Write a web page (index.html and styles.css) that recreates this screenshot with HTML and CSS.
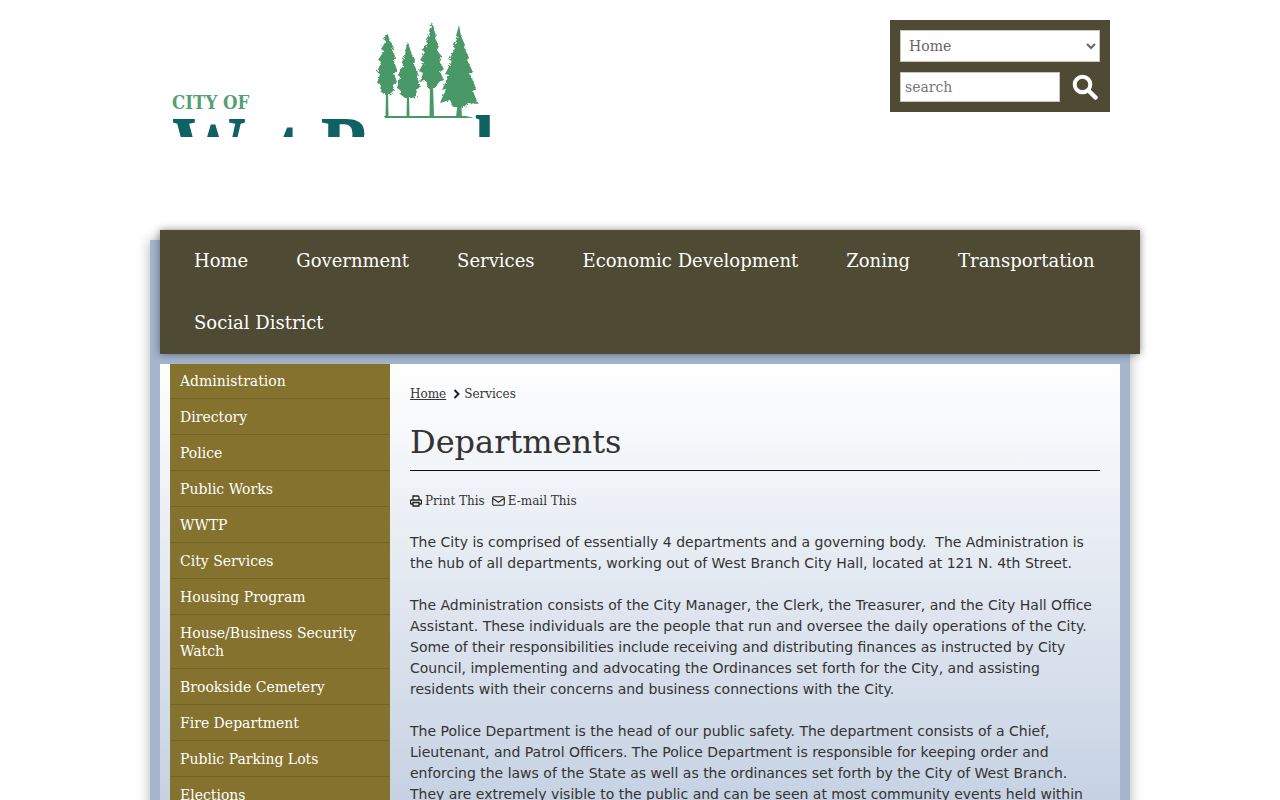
FILE: index.html
```html
<!DOCTYPE html>
<html lang="en">
<head>
    <meta charset="UTF-8">
    <meta name="viewport" content="width=device-width, initial-scale=1.0">
    <title>Departments - City of West Branch</title>
    <link rel="stylesheet" href="styles.css">
</head>
<body>
    <div class="page">
        <div class="header">
            <div class="logo">
                <svg class="logo-trees" width="120" height="100" viewBox="375 20 120 100" aria-hidden="true">
                    <defs>
                        <filter id="rough" x="-10%" y="-10%" width="120%" height="120%">
                            <feTurbulence type="fractalNoise" baseFrequency="0.45" numOctaves="2" seed="4"/>
                            <feDisplacementMap in="SourceGraphic" scale="3.500"/>
                        </filter>
                    </defs>
                    <g filter="url(#rough)">
                        <path d="M387 32 L384 40 L386 41 L381 49 L384 51 L378 60 L381 62 L377 72 L380 74 L377 83 L381 84 L380 91 L384 94 L390 94 L394 90 L393 85 L397 82 L394 74 L397 70 L394 61 L396 58 L392 50 L394 48 L390 41 Z"/>
                        <path d="M408 42 L405 51 L406 53 L402 62 L403 65 L398 75 L400 77 L397 88 L400 90 L400 94 L405 98 L412 98 L417 96 L416 90 L420 87 L417 77 L418 74 L414 64 L415 61 L411 52 Z"/>
                        <path d="M432 22 L429 31 L430 33 L425 41 L428 43 L422 50 L425 52 L420 60 L424 62 L419 71 L423 73 L420 82 L426 81 L428 88 L435 88 L439 82 L444 80 L440 72 L444 69 L439 60 L442 57 L437 50 L439 46 L435 38 L436 36 Z"/>
                        <path d="M459 25 L456 36 L458 37 L453 47 L455 48 L449 60 L452 61 L445 74 L449 75 L442 90 L446 89 L440 103 L450 100 L453 107 L464 107 L468 103 L478 104 L473 91 L476 88 L470 74 L473 72 L467 60 L469 58 L464 47 L465 45 L461 36 Z"/>
                    </g>
                    <path d="M386 90 L388 90 L388.500 117 L385.500 117 Z"/>
                    <path d="M407 95 L409 95 L409.500 117 L406.500 117 Z"/>
                    <path d="M430 85 L433 85 L434 117 L429.500 117 Z"/>
                    <path d="M458 100 L461 100 L462 117 L456 117 Z"/>
                    <path d="M384 116 H466 L474 118 H385 Z"/>
                </svg>
                <div class="logo-city">CITY OF</div>
                <div class="logo-name"><span class="logo-west">West</span> <span class="logo-branch">Branch</span></div>
            </div>
            <div class="search-box">
                <select class="page-select">
                    <option>Home</option>
                </select>
                <div class="search-row">
                    <input class="search-input" type="text" placeholder="search">
                    <svg class="search-icon" width="26" height="26" viewBox="0 0 26 26" aria-hidden="true">
                        <circle cx="10.500" cy="10.500" r="7.800" fill="none" stroke="#fff" stroke-width="4"/>
                        <path d="M16.500 16.500 L23.500 23.500" stroke="#fff" stroke-width="4.500" stroke-linecap="round"/>
                    </svg>
                </div>
            </div>
        </div>

        <div class="wrapper">
            <ul class="main-nav">
                <li><a href="#">Home</a></li>
                <li><a href="#">Government</a></li>
                <li><a href="#">Services</a></li>
                <li><a href="#">Economic Development</a></li>
                <li><a href="#">Zoning</a></li>
                <li><a href="#">Transportation</a></li>
                <li><a href="#">Social District</a></li>
            </ul>

            <div class="content">
                <ul class="side-nav">
                    <li><a href="#">Administration</a></li>
                    <li><a href="#">Directory</a></li>
                    <li><a href="#">Police</a></li>
                    <li><a href="#">Public Works</a></li>
                    <li><a href="#">WWTP</a></li>
                    <li><a href="#">City Services</a></li>
                    <li><a href="#">Housing Program</a></li>
                    <li><a href="#">House/Business Security Watch</a></li>
                    <li><a href="#">Brookside Cemetery</a></li>
                    <li><a href="#">Fire Department</a></li>
                    <li><a href="#">Public Parking Lots</a></li>
                    <li><a href="#">Elections</a></li>
                </ul>

                <div class="main">
                    <div class="breadcrumb">
                        <a href="#">Home</a>
                        <svg class="crumb-arrow" width="7" height="10" viewBox="0 0 7 10" aria-hidden="true">
                            <path d="M1.500 1 L5.500 5 L1.500 9" fill="none" stroke="#222" stroke-width="2"/>
                        </svg>
                        <span>Services</span>
                    </div>
                    <h1>Departments</h1>
                    <div class="tools">
                        <span class="tool">
                            <svg width="12" height="12" viewBox="0 0 12 12" aria-hidden="true">
                                <path d="M3 5 V1 H8 L9 2 V5 M3 9 H1 a0.500 0.500 0 0 1 -0.500 -0.500 V6 a1 1 0 0 1 1 -1 H10.500 a1 1 0 0 1 1 1 V8.500 a0.500 0.500 0 0 1 -0.500 0.500 H9 M3 7.500 H9 V11 H3 Z" fill="none" stroke="#222" stroke-width="1.300"/>
                            </svg>
                            Print This
                        </span>
                        <span class="tool">
                            <svg width="13" height="12" viewBox="0 0 13 12" aria-hidden="true">
                                <rect x="0.700" y="1.700" width="11.600" height="8.600" rx="1.200" fill="none" stroke="#222" stroke-width="1.100"/>
                                <path d="M1 3.500 L6.500 7.300 L12 3.500" fill="none" stroke="#222" stroke-width="1.100"/>
                            </svg>
                            E-mail This
                        </span>
                    </div>
                    <p>The City is comprised of essentially 4 departments and a governing body.&nbsp; The Administration is the hub of all departments, working out of West Branch City Hall, located at 121 N. 4th Street.</p>
                    <p>The Administration consists of the City Manager, the Clerk, the Treasurer, and the City Hall Office Assistant. These individuals are the people that run and oversee the daily operations of the City. Some of their responsibilities include receiving and distributing finances as instructed by City Council, implementing and advocating the Ordinances set forth for the City, and assisting residents with their concerns and business connections with the City.</p>
                    <p>The Police Department is the head of our public safety. The department consists of a Chief, Lieutenant, and Patrol Officers. The Police Department is responsible for keeping order and enforcing the laws of the State as well as the ordinances set forth by the City of West Branch. They are extremely visible to the public and can be seen at most community events held within the City.</p>
                </div>
            </div>
        </div>
    </div>
</body>
</html>
```

FILE: styles.css
```css
body {
    margin: 0;
    background-color: #fff;
    color: #333;
    font-family: "DejaVu Sans", sans-serif;
}
a {
    color: inherit;
}
ul {
    list-style: none;
    margin: 0;
    padding: 0;
}
.page {
    width: 980px;
    margin: 0 auto;
}

/* header */
.header {
    display: flex;
    justify-content: space-between;
    align-items: flex-start;
    height: 230px;
    padding-right: 20px;
    box-sizing: border-box;
}
.logo {
    position: relative;
    width: 350px;
    height: 137px;
    overflow: hidden;
}
.logo-trees {
    position: absolute;
    left: 225px;
    top: 20px;
    fill: #4a9868;
}
.logo-city {
    position: absolute;
    left: 22px;
    top: 92px;
    font-family: "DejaVu Serif Condensed", "Liberation Serif", serif;
    font-weight: bold;
    font-size: 18.500px;
    line-height: 21px;
    color: #569f74;
}
.logo-name {
    position: absolute;
    left: 22px;
    top: 116px;
    font-family: "Liberation Serif", serif;
    font-weight: bold;
    font-size: 74px;
    line-height: 50px;
    white-space: nowrap;
    word-spacing: 10px;
    color: #0f6264;
    transform: scaleY(1.35);
    transform-origin: top;
}
.logo-west {
    letter-spacing: -9px;
}
.logo-branch {
    letter-spacing: -8px;
}
.search-box {
    margin-top: 20px;
    width: 220px;
    padding: 10px;
    box-sizing: border-box;
    background-color: #4f4a33;
}
.page-select {
    display: block;
    width: 200px;
    height: 32px;
    padding: 0 4px;
    border: 1px solid #c9c5b8;
    border-radius: 0;
    background-color: #fff;
    color: #666;
    font-family: "DejaVu Serif", serif;
    font-size: 14px;
}
.search-row {
    display: flex;
    align-items: center;
    justify-content: space-between;
    margin-top: 10px;
    padding-right: 2px;
}
.search-input {
    width: 160px;
    height: 30px;
    padding: 0 4px;
    box-sizing: border-box;
    border: 1px solid #c9c5b8;
    border-radius: 0;
    color: #666;
    font-family: "DejaVu Serif", serif;
    font-size: 14px;
}
.search-input::placeholder {
    color: #777;
}

/* blue frame with main nav on top */
.wrapper {
    display: flow-root;
    margin-top: 10px;
    width: 980px;
    padding: 0 10px 10px;
    box-sizing: border-box;
    background-color: #a4b5cc;
    box-shadow: 0 0 12px rgba(0, 0, 0, 0.3);
}
.main-nav {
    display: flex;
    flex-wrap: wrap;
    width: 980px;
    margin-top: -10px;
    padding: 0 10px;
    box-sizing: border-box;
    background-color: #4f4a33;
    box-shadow: 0 0 8px rgba(0, 0, 0, 0.45);
    position: relative;
}
.main-nav a {
    display: block;
    padding: 0 24px;
    color: #fff;
    font-family: "DejaVu Serif", serif;
    font-size: 18px;
    line-height: 62px;
    text-decoration: none;
}
.content {
    display: flex;
    align-items: flex-start;
    margin-top: 10px;
    padding-left: 10px;
    background: linear-gradient(#fff, #c6d2e3 436px);
}
.side-nav {
    flex: 0 0 220px;
    background-color: #84722e;
}
.side-nav a {
    display: block;
    margin-bottom: 1px;
    padding: 8px 10px;
    border-bottom: 1px solid #75642a;
    color: #fff;
    font-family: "DejaVu Serif", serif;
    font-size: 14px;
    line-height: 18px;
    text-decoration: none;
}
.main {
    flex: 1;
    padding: 21px 20px 20px;
    min-width: 0;
}
.breadcrumb {
    display: flex;
    align-items: center;
    font-family: "DejaVu Serif", serif;
    font-size: 12px;
    line-height: 18px;
}
.crumb-arrow {
    margin: 0 4px 0 7px;
}
h1 {
    margin: 18px 0 0;
    padding-bottom: 7px;
    border-bottom: 1px solid #111;
    font-family: "DejaVu Serif", serif;
    font-size: 32px;
    font-weight: normal;
    line-height: 42px;
}
.tools {
    display: flex;
    gap: 7px;
    margin-top: 21px;
    margin-bottom: 22px;
    font-family: "DejaVu Serif", serif;
    font-size: 12px;
    line-height: 18px;
}
.tool {
    display: inline-flex;
    align-items: center;
    gap: 3px;
}
p {
    margin: 21px 0 0;
    font-size: 14px;
    line-height: 21px;
}
```
